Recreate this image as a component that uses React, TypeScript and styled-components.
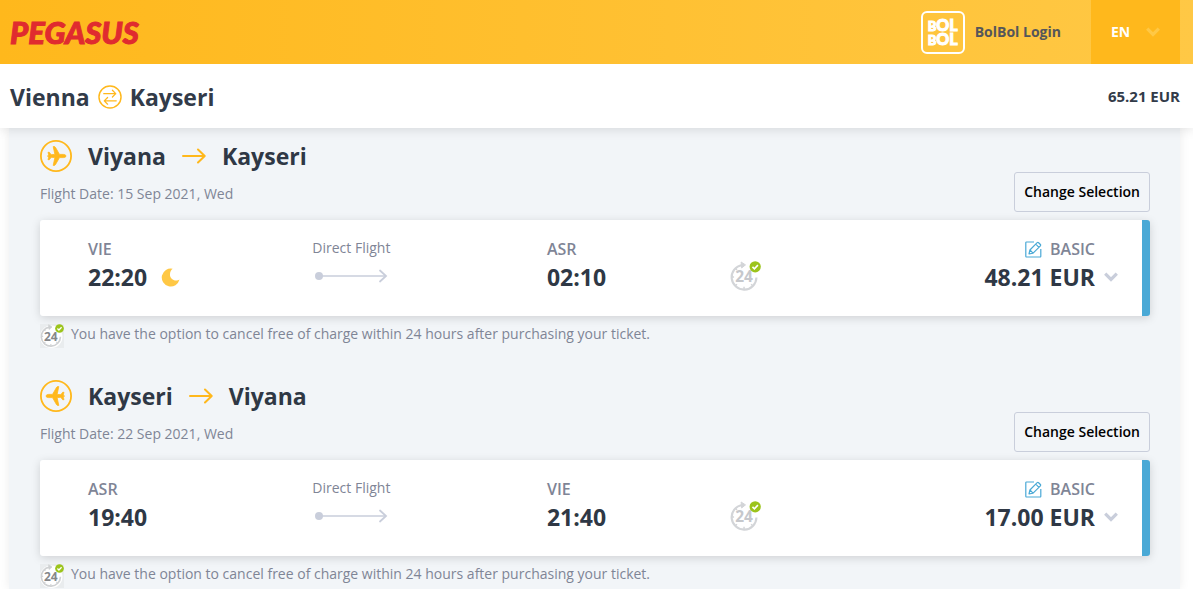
import React from "react";
import styled, { createGlobalStyle } from "styled-components";

const color = {
  amber: "#ffb81c",
  amberSoft: "#ffc845",
  ink: "#323b49",
  title: "#2f3845",
  muted: "#7f8596",
  faint: "#c9cedb",
  panel: "#f2f5f8",
  blue: "#4aa9d6",
  red: "#e02b2f",
};

const GlobalStyle = createGlobalStyle`
  *, *::before, *::after { box-sizing: border-box; }
  body {
    margin: 0;
    background: #fff;
    color: ${color.ink};
    font-family: "Open Sans", "Noto Sans", sans-serif;
    font-size: 14px;
    line-height: 20px;
  }
  svg { display: block; flex: none; }
  h1, h2, p { margin: 0; }
`;

const Page = styled.div`
  display: flex;
  flex-direction: column;
  min-height: 100vh;
`;

const TopBar = styled.header`
  display: flex;
  align-items: stretch;
  height: 64px;
  padding: 0 13px 0 10px;
  background: linear-gradient(90deg, ${color.amber}, ${color.amberSoft});
`;

const Brand = styled.a`
  align-self: center;
  margin-right: auto;
  color: ${color.red};
  font: italic 900 31px/32px Lato, "Open Sans", sans-serif;
  -webkit-text-stroke: 1px ${color.red};
  text-decoration: none;
`;

const LoginLink = styled.a`
  display: flex;
  align-items: center;
  gap: 10px;
  margin-right: 30px;
  color: #55565a;
  font-weight: 700;
  text-decoration: none;
`;

const BolBadge = styled.span`
  display: flex;
  flex-direction: column;
  justify-content: center;
  align-items: center;
  width: 44px;
  height: 43px;
  border: 2px solid #fff;
  border-radius: 6px;
  color: #fff;
  font: 900 16px/14px Lato, sans-serif;
  -webkit-text-stroke: 1px #fff;
`;

const BolLine = styled.span`
  display: block;
  height: 14px;

  &::first-letter { font-size: 13px; line-height: 14px; }
`;

const Language = styled.label`
  display: grid;
  align-items: center;
  width: 89px;
  background: ${color.amber};
  color: ${color.amberSoft};

  > * { grid-area: 1 / 1; }
  > svg { justify-self: end; margin-right: 20px; pointer-events: none; }
`;

const LanguageSelect = styled.select`
  width: 100%;
  height: 100%;
  padding: 0 20px;
  border: 0;
  appearance: none;
  background: transparent;
  color: #fff;
  font: inherit;
  font-weight: 700;
`;

const SummaryBar = styled.div`
  position: relative;
  display: flex;
  align-items: center;
  justify-content: space-between;
  height: 64px;
  padding: 0 13px 0 10px;
  background: #fff;
  clip-path: inset(0 0 -12px 0);
  box-shadow: 0 0 12px rgba(0, 0, 0, 0.15);
`;

const Route = styled.h1`
  display: flex;
  align-items: center;
  gap: 8px;
  padding-top: 2px;
  font-size: 23px;
  font-weight: 700;
  line-height: 32px;
`;

const Total = styled.strong`
  font-size: 15px;
  font-weight: 700;
`;

const Panel = styled.main`
  flex: 1;
  display: flex;
  flex-direction: column;
  gap: 32px;
  margin: 0 13px 0 9px;
  padding: 12px 30px 0 31px;
  background: ${color.panel};
  box-shadow: 0 0 10px rgba(0, 0, 0, 0.08);
`;

const SegmentHead = styled.div`
  display: flex;
  align-items: flex-end;
  justify-content: space-between;
  margin-bottom: 8px;
`;

const SegmentTitle = styled.h2`
  display: flex;
  align-items: center;
  gap: 16px;
  color: ${color.title};
  font-size: 23px;
  font-weight: 700;
  line-height: 32px;
`;

const FlightDate = styled.p`
  padding: 12px 0 8px;
  color: ${color.muted};
`;

const OutlineButton = styled.button`
  height: 40px;
  padding: 0 9px;
  border: 1px solid ${color.faint};
  border-radius: 3px;
  background: transparent;
  color: #000;
  font: inherit;
  font-weight: 600;
`;

const Card = styled.article`
  display: grid;
  grid-template-columns: 22fr 23fr 18fr 17fr 21fr;
  height: 96px;
  padding: 17px 24px 0 48px;
  border-right: 8px solid ${color.blue};
  border-radius: 3px;
  background: #fff;
  box-shadow: 0 2px 10px rgba(0, 0, 0, 0.15);
`;

const Code = styled.div`
  color: ${color.muted};
  font-size: 16px;
  font-weight: 600;
  line-height: 24px;
`;

const Time = styled.div`
  display: flex;
  align-items: center;
  gap: 14px;
  color: ${color.title};
  font-size: 23px;
  font-weight: 700;
  line-height: 32px;
`;

const Leg = styled.div`
  display: flex;
  flex-direction: column;
  align-items: center;
  justify-self: start;
  color: ${color.muted};
  line-height: 22px;

  > svg { margin-top: 10px; }
`;

const CancelCell = styled.div`
  padding-top: 24px;
`;

const FareButton = styled.button`
  display: grid;
  grid-template-columns: auto 14px;
  column-gap: 9px;
  align-content: start;
  align-items: center;
  align-self: start;
  justify-self: end;
  justify-items: end;
  padding: 0;
  border: 0;
  background: none;
  color: ${color.faint};
  font: inherit;
`;

const FareClass = styled.span`
  display: flex;
  align-items: center;
  gap: 8px;
  grid-column: 1;
  color: ${color.muted};
  font-size: 16px;
  font-weight: 600;
  line-height: 24px;
`;

const Price = styled.span`
  grid-column: 1;
  color: ${color.title};
  font-size: 23px;
  font-weight: 700;
  line-height: 32px;
`;

const Note = styled.p`
  display: flex;
  gap: 7px;
  height: 24px;
  margin-top: 8px;
  color: ${color.muted};
`;

const NoteIcon = styled.span`
  background: #e9ecee;
`;

const SwapIcon = () => (
  <svg width="24" height="24" viewBox="0 0 25 25" fill="none" stroke={color.amber} strokeWidth="1.5" strokeLinecap="round" strokeLinejoin="round">
    <circle cx="12.5" cy="12.5" r="11.5" />
    <path d="M6 9h12.5M15 5.500L18.500 9 15 12.500M19 16.5H6.5M10 13l-3.5 3.5L10 20" strokeWidth="1.3" />
  </svg>
);

const PlaneIcon = ({ inbound }: { inbound?: boolean }) => (
  <svg width="32" height="32" viewBox="0 0 32 32">
    <circle cx="16" cy="16" r="15.1" fill="none" stroke={color.amber} strokeWidth="1.8" />
    <path
      fill={color.amber}
      stroke={color.amber}
      strokeWidth="0.8"
      strokeLinejoin="round"
      transform={inbound ? "translate(32 0) scale(-1 1)" : undefined}
      d="M26 16c0-.9-1.300-1.600-2.700-1.600h-3.800L15.400 7.300c-.3-.5-.7-.7-1.300-.7h-.9l1.700 7.800-3.700.3L9.300 12.300H8l.9 3.200-1.200.2v.7l1.200.2L8 19.700h1.300l1.900-2.400 3.700.3-1.700 7.800h.9c.6 0 1-.2 1.300-.7l4.100-7.100h3.800c1.400 0 2.700-.7 2.700-1.600z"
    />
  </svg>
);

const RouteArrow = () => (
  <svg width="24" height="16" viewBox="0 0 24 16" fill="none" stroke={color.amber} strokeWidth="2" strokeLinecap="round" strokeLinejoin="round">
    <path d="M1 8h21.500M16 1.500L22.700 8 16 14.500" />
  </svg>
);

const LegArrow = () => (
  <svg width="74" height="14" viewBox="0 0 74 14" fill="none" stroke={color.faint} strokeLinecap="round">
    <circle cx="5" cy="7" r="4" fill={color.faint} stroke="none" />
    <path d="M8 7h63" strokeWidth="1.600" />
    <path d="M66 1.500L72 7l-6 5.500" strokeWidth="1.800" />
  </svg>
);

const MoonIcon = () => (
  <svg width="19" height="19" viewBox="0 0 19 19">
    <path fill={color.amberSoft} d="M11.700.7A9 9 0 1 0 18.500 11.600 6.200 6.200 0 0 1 9 7.400C8.800 4.500 9.800 2 11.700.7z" />
  </svg>
);

const Chevron = () => (
  <svg width="14" height="10" viewBox="0 0 14 10" fill="none" stroke="currentColor" strokeWidth="3.200">
    <path d="M1.200 1.700L7 7.500l5.800-5.800" />
  </svg>
);

const EditIcon = () => (
  <svg width="17" height="17" viewBox="0 0 17 17" fill="none" stroke={color.blue} strokeWidth="1.200" strokeLinejoin="round">
    <path d="M9 1H1.500a.7.7 0 0 0-.7.700v13.600a.7.7 0 0 0 .7.700h13.600a.7.7 0 0 0 .7-.700V8" />
    <path d="M4 13l.9-4 7.300-7.300a1 1 0 0 1 1.400 0l1.800 1.800a1 1 0 0 1 0 1.400L8.100 12.200zM10.800 3.200l3.100 3.100M4.900 9l3.200 3.200" />
  </svg>
);

const Cancel24 = ({ size, ring, text, disc }: { size: number; ring: string; text: string; disc?: boolean }) => (
  <svg width={size} height={size} viewBox="0 0 32 32">
    {disc && <circle cx="15" cy="17" r="15" fill="#fff" />}
    <path d="M12.500 4.100A12.800 12.800 0 1 0 27.300 17" fill="none" stroke={ring} strokeWidth="2.200" />
    <path d="M11.500 1l4.500 3-4 3.200z" fill={ring} stroke={ring} />
    <path d="M1.800 16.500h2.400M14.500 29v-2.400M5.500 25.600l1.700-1.700M23.500 25.600l-1.700-1.700M5.500 7.500l1.700 1.700" stroke={ring} strokeWidth="1.500" />
    <text x="14.500" y="22" textAnchor="middle" fontFamily="Open Sans, sans-serif" fontWeight="700" fontSize="16" fill={text}>24</text>
    <circle cx="26" cy="6" r="5.800" fill="#9cc41c" />
    <path d="M23.200 6l2 2 3.600-3.700" fill="none" stroke="#fff" strokeWidth="1.700" />
  </svg>
);

type Flight = {
  from: string;
  to: string;
  date: string;
  dep: [string, string];
  arr: [string, string];
  price: string;
  night?: boolean;
  inbound?: boolean;
};

const flights: Flight[] = [
  { from: "Viyana", to: "Kayseri", date: "15 Sep 2021, Wed", dep: ["VIE", "22:20"], arr: ["ASR", "02:10"], price: "48.21 EUR", night: true },
  { from: "Kayseri", to: "Viyana", date: "22 Sep 2021, Wed", dep: ["ASR", "19:40"], arr: ["VIE", "21:40"], price: "17.00 EUR", inbound: true },
];

const Segment = ({ flight }: { flight: Flight }) => (
  <section>
    <SegmentHead>
      <div>
        <SegmentTitle>
          <PlaneIcon inbound={flight.inbound} />
          <span>{flight.from}</span>
          <RouteArrow />
          <span>{flight.to}</span>
        </SegmentTitle>
        <FlightDate>Flight Date: {flight.date}</FlightDate>
      </div>
      <OutlineButton type="button">Change Selection</OutlineButton>
    </SegmentHead>
    <Card>
      <div>
        <Code>{flight.dep[0]}</Code>
        <Time>
          {flight.dep[1]}
          {flight.night && <MoonIcon />}
        </Time>
      </div>
      <Leg>
        Direct Flight
        <LegArrow />
      </Leg>
      <div>
        <Code>{flight.arr[0]}</Code>
        <Time>{flight.arr[1]}</Time>
      </div>
      <CancelCell>
        <Cancel24 size={31} ring="#d3d5d8" text="#c6c8cc" />
      </CancelCell>
      <FareButton type="button">
        <FareClass>
          <EditIcon />
          BASIC
        </FareClass>
        <Price>{flight.price}</Price>
        <Chevron />
      </FareButton>
    </Card>
    <Note>
      <NoteIcon>
        <Cancel24 size={24} ring="#cfd1d3" text="#85878a" disc />
      </NoteIcon>
      You have the option to cancel free of charge within 24 hours after purchasing your ticket.
    </Note>
  </section>
);

export default function App() {
  return (
    <Page>
      <GlobalStyle />
      <TopBar>
        <Brand href="#home">PEGASUS</Brand>
        <LoginLink href="#login">
          <BolBadge>
            <BolLine>BOL</BolLine>
            <BolLine>BOL</BolLine>
          </BolBadge>
          BolBol Login
        </LoginLink>
        <Language>
          <LanguageSelect aria-label="Language" defaultValue="EN">
            <option>EN</option>
            <option>TR</option>
            <option>DE</option>
          </LanguageSelect>
          <Chevron />
        </Language>
      </TopBar>
      <SummaryBar>
        <Route>
          <span>Vienna</span>
          <SwapIcon />
          <span>Kayseri</span>
        </Route>
        <Total>65.21 EUR</Total>
      </SummaryBar>
      <Panel>
        {flights.map((flight) => (
          <Segment key={flight.date} flight={flight} />
        ))}
      </Panel>
    </Page>
  );
}
